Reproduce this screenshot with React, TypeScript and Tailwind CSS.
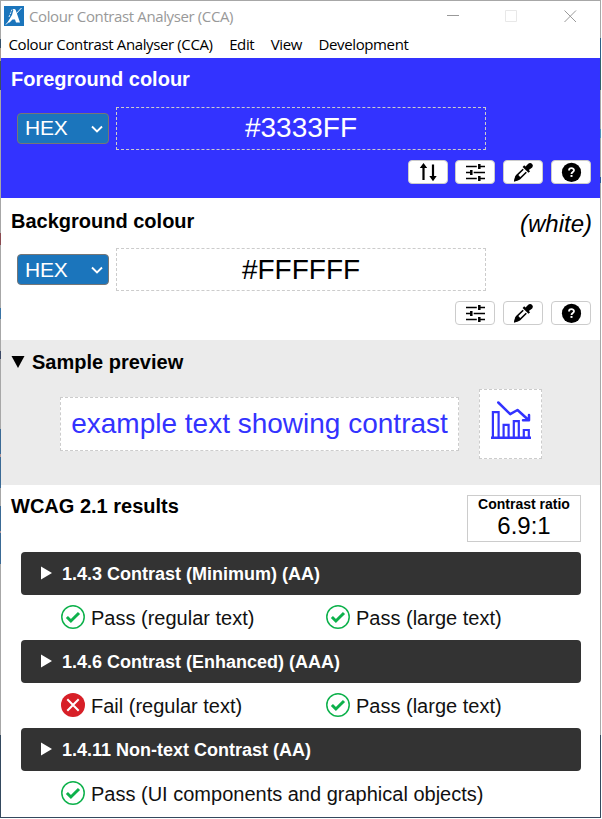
import type { ReactNode } from 'react';

const buttonClass =
  'flex h-6 w-10 items-center justify-center rounded-[4px] border border-[#cccccc] bg-white';

function SwapIcon() {
  return (
    <svg width="40" height="24" viewBox="0 0 40 24" fill="none" stroke="#000" strokeWidth="2.200">
      <path d="M15.500 20V5.500M25 4.500V18.500" />
      <path d="M11.800 8 15.500 3 19.200 8ZM21.300 16 25 21.200 28.700 16Z" fill="#000" stroke="none" />
    </svg>
  );
}

function SlidersIcon() {
  return (
    <svg width="40" height="24" viewBox="0 0 40 24" fill="none" stroke="#000">
      <path d="M11 6.500H21.800M24.300 6.500H30M11 12.500H16.300M18.700 12.500H30M11 18.500H21.800M24.300 18.500H30" strokeWidth="1.300" />
      <path d="M24.300 4V9M16.300 10V15M24.300 16V21" strokeWidth="2.500" strokeLinecap="butt" />
    </svg>
  );
}

function PickerIcon() {
  return (
    <svg width="40" height="24" viewBox="0 0 40 24">
      <path
        d="M29.200 4.100a3 3 0 0 0-4.200 0l-2.500 2.500-1.300-1.300-1.600 1.600 5.900 5.900 1.600-1.600-1.300-1.300 3.400-2.400a2.600 2.600 0 0 0 0-3.400Z"
        fill="#000"
      />
      <path d="m20.200 9.200-6.700 6.600-1.400 4.300 4.500-1.200 6.700-6.700" fill="none" stroke="#000" strokeWidth="1.600" />
      <path d="m11 21.700 1-5 2.600-2.400 3.300 3.400-2.400 2.500Z" fill="#000" />
    </svg>
  );
}

function HelpIcon() {
  return (
    <svg width="40" height="24" viewBox="0 0 40 24">
      <circle cx="20.500" cy="12.400" r="9.600" fill="#000" />
      <path d="M18 10.400c0-3 5-2.900 5-.2 0 1.800-2.500 1.700-2.500 3.700" fill="none" stroke="#fff" strokeWidth="1.800" />
      <path d="M19.500 15h2v1.900h-2Z" fill="#fff" />
    </svg>
  );
}

function Tool({ label, className = '', children }: { label: string; className?: string; children: ReactNode }) {
  return (
    <button aria-label={label} className={`${buttonClass} ${className}`}>
      <span className="-m-px shrink-0">{children}</span>
    </button>
  );
}

function HexSelect({ textClass }: { textClass: string }) {
  return (
    <div className="flex h-[31px] w-[92px] items-center justify-between rounded-[4px] border border-[#767676] bg-[#1b75bc] pr-[5px] pl-[7px] text-[21px] leading-none text-white">
      <span className={`tracking-[-0.2px] ${textClass}`}>HEX</span>
      <svg width="12" height="12" viewBox="0 0 12 12" fill="none" stroke="#fff" strokeWidth="1.900">
        <path d="m1 3.500 5 5 5-5" />
      </svg>
    </div>
  );
}

function ColourRow({ value, selectClass = '', valueClass = '' }: { value: string; selectClass?: string; valueClass?: string }) {
  return (
    <div className="flex items-center pl-4">
      <HexSelect textClass={selectClass} />
      <div
        className={`ml-[7px] flex h-[43px] w-[370px] items-center justify-center border border-dashed border-[#cccccc] text-[28px] leading-none ${valueClass}`}
      >
        {value}
      </div>
    </div>
  );
}

function PassIcon() {
  return (
    <svg width="24" height="24" viewBox="0 0 24 24" fill="none" stroke="#0db14b" className="shrink-0">
      <circle cx="12" cy="12" r="11.200" strokeWidth="1.500" />
      <path d="m5.900 12 4 4L18 8" strokeWidth="3" />
    </svg>
  );
}

function FailIcon() {
  return (
    <svg width="24" height="24" viewBox="0 0 24 24" fill="none" className="shrink-0">
      <circle cx="12" cy="12" r="12" fill="#d71f27" />
      <path d="m6.300 6.300 11.400 11.400M17.700 6.300 6.300 17.700" stroke="#fff" strokeWidth="2" />
    </svg>
  );
}

function Result({ pass = true, children }: { pass?: boolean; children: ReactNode }) {
  return (
    <div className="flex h-6 w-[265px] shrink-0 items-center gap-[6px] whitespace-nowrap text-[20px] leading-[24px] text-[#111111]">
      {pass ? <PassIcon /> : <FailIcon />}
      <span className="pt-px">{children}</span>
    </div>
  );
}

function Criterion({ title, children }: { title: string; children: ReactNode }) {
  return (
    <section>
      <div className="flex h-[43px] items-center rounded-[4px] bg-[#333333] pl-5 text-[18px] leading-none font-bold text-white">
        <svg width="11" height="14" viewBox="0 0 11 14" fill="#fff" className="mr-[10px] mb-[2px]">
          <path d="M0 .5 11 7 0 13.500Z" />
        </svg>
        <h3>{title}</h3>
      </div>
      <div className="flex h-[45px] pt-[10px] pl-10">{children}</div>
    </section>
  );
}

function LeftEdge() {
  return (
    <div className="flex w-px shrink-0 flex-col bg-[#a7a7a7]">
      <i className="mt-[38px] h-[9px] bg-[#34506a]" />
      <i className="h-[13px] bg-[#a99a94]" />
      <i className="h-[29px] bg-[#3c4f60]" />
      <i className="mt-[143px] h-[12px] bg-[#8a4a50]" />
      <i className="mt-[63px] h-[11px] bg-[#3a74a5]" />
      <i className="mt-[32px] h-[8px] bg-[#3d4a66]" />
      <i className="mt-[70px] h-[25px] bg-[#3a6a95]" />
      <i className="h-[3px] bg-[#b09698]" />
      <i className="h-[31px] bg-[#3a6a95]" />
      <i className="mt-[18px] h-[25px] bg-[#3a6a95]" />
      <i className="h-[2px] bg-[#b09698]" />
      <i className="h-[31px] bg-[#3a6a95]" />
      <i className="mt-[171px] grow bg-[#34495e]" />
    </div>
  );
}

function RightEdge() {
  return (
    <div className="flex w-px shrink-0 flex-col bg-[#a7a7a7]">
      <i className="mt-[37px] h-[22px] bg-[#2c5f86]" />
      <i className="h-[30px] bg-[#33606c]" />
      <i className="mt-[39px] h-[9px] bg-[#4f8fb8]" />
      <i className="mt-[39px] h-[6px] bg-[#2b5797]" />
      <i className="mt-[552px] grow bg-[#34495e]" />
    </div>
  );
}

export default function App() {
  return (
    <div className="flex h-[818px] w-[601px] overflow-hidden border-t border-b border-t-[#a7a7a7] border-b-[#34495e] bg-white font-['Liberation_Sans',Arial,sans-serif] text-black">
      <LeftEdge />
      <main className="flex w-[599px] flex-col overflow-hidden">
        <header className="h-[57px] shrink-0 font-['Open_Sans','Noto_Sans',sans-serif] text-[15px] tracking-[-0.38px]">
          <div className="flex h-[30px] items-center pl-[3px] text-[#999999]">
            <svg width="20" height="20" viewBox="0 0 20 20">
              <path d="M0 0h20v20H0Z" fill="#1b75bc" />
              <path d="M9.500 3.500h2L16 16.500h-4l-1-3H8.500l-3 3H3.500L8 9Z" fill="#fff" />
              <path d="M5 11 8 3.500h3" fill="none" stroke="#fff" strokeWidth=".9" strokeDasharray="2 1" />
              <path d="M17.500 2 2 18.500" stroke="#fff" strokeWidth="1" />
            </svg>
            <span className="ml-[5px] pt-px">Colour Contrast Analyser (CCA)</span>
            <svg className="mr-[23px] ml-auto" width="130" height="14" viewBox="0 0 130 14" fill="none" stroke="#999">
              <path d="M0 6.500h12M117.500 1.500 129 13M129 1.500 117.500 13" />
              <path d="M58.500 1.500h11v11h-11Z" stroke="#e8e8e8" />
            </svg>
          </div>
          <nav className="flex h-[26px] items-center gap-[16.5px] pl-[7.5px]">
            <span>Colour Contrast Analyser (CCA)</span>
            <span>Edit</span>
            <span>View</span>
            <span>Development</span>
          </nav>
        </header>

        <section className="h-[140px] shrink-0 bg-[#3333ff] pt-[9px] text-white">
          <h2 className="pl-[10px] text-[20px] leading-6 font-bold">Foreground colour</h2>
          <div className="pt-[16px]">
            <ColourRow value="#3333FF" selectClass="pb-[2px]" valueClass="pb-[2px]" />
          </div>
          <div className="flex justify-end gap-2 pt-[10px] pr-[9px]">
            <Tool label="Swap colours" className="-mr-px"><SwapIcon /></Tool>
            <Tool label="Adjust foreground"><SlidersIcon /></Tool>
            <Tool label="Pick foreground"><PickerIcon /></Tool>
            <Tool label="Foreground help"><HelpIcon /></Tool>
          </div>
        </section>

        <section className="h-[142px] shrink-0 pt-[11px]">
          <div className="flex h-[39px] justify-between pr-[8px] pl-[10px]">
            <h2 className="text-[20px] leading-6 font-bold">Background colour</h2>
            <span className="pt-[3px] text-[24px] leading-6 italic">(white)</span>
          </div>
          <ColourRow value="#FFFFFF" />
          <div className="flex justify-end gap-2 pt-[10px] pr-[9px]">
            <Tool label="Adjust background"><SlidersIcon /></Tool>
            <Tool label="Pick background"><PickerIcon /></Tool>
            <Tool label="Background help"><HelpIcon /></Tool>
          </div>
        </section>

        <section className="h-[145px] shrink-0 bg-[#ebebeb] pt-[10px]">
          <h2 className="flex items-center pl-[10px] text-[20px] leading-6 font-bold">
            <svg width="14" height="12" viewBox="0 0 14 12" className="mr-[7px]">
              <path d="M.5 0h13L7 12Z" />
            </svg>
            Sample preview
          </h2>
          <div className="flex items-center gap-5 pt-[15px] pl-[59px] text-[#3333ff]">
            <div className="flex h-[54px] w-[399px] items-center justify-center border border-dashed border-[#cccccc] bg-white text-[28px] leading-none whitespace-nowrap">
              example text showing contrast
            </div>
            <div className="h-[70px] w-[63px] border border-dashed border-[#cccccc] bg-white pt-[10px] pl-[11px]">
              <svg width="40" height="40" viewBox="0 0 40 40" fill="none" stroke="#3333ff" strokeWidth="2.200">
                <path d="M0 37.700h40" strokeWidth="2.600" />
                <path d="M1.900 37V12.200h5.700V37M12.600 37V24.800h5V37M22.800 37V21.200h5V37M32.800 37v-7h5V37" />
                <path d="m7.300 2.500 11.900 11.700 7.300-4.200L37.500 20M38 15v5.200h-6" strokeWidth="2.500" strokeLinecap="round" strokeLinejoin="round" />
              </svg>
            </div>
          </div>
        </section>

        <section className="grow">
          <div className="flex h-[67px] justify-between pt-[10px] pr-[19px] pl-[10px]">
            <h2 className="-mt-px text-[20px] leading-6 font-bold">WCAG 2.1 results</h2>
            <div className="flex h-[47px] w-[114px] flex-col items-center border border-[#cccccc]">
              <span className="text-[14px] leading-4 font-bold">Contrast ratio</span>
              <span className="text-[24px] leading-[27px]">6.9:1</span>
            </div>
          </div>
          <div className="mr-[19px] ml-5">
            <Criterion title="1.4.3 Contrast (Minimum) (AA)">
              <Result>Pass (regular text)</Result>
              <Result>Pass (large text)</Result>
            </Criterion>
            <Criterion title="1.4.6 Contrast (Enhanced) (AAA)">
              <Result pass={false}>Fail (regular text)</Result>
              <Result>Pass (large text)</Result>
            </Criterion>
            <Criterion title="1.4.11 Non-text Contrast (AA)">
              <Result>Pass (UI components and graphical objects)</Result>
            </Criterion>
          </div>
        </section>
      </main>
      <RightEdge />
    </div>
  );
}
